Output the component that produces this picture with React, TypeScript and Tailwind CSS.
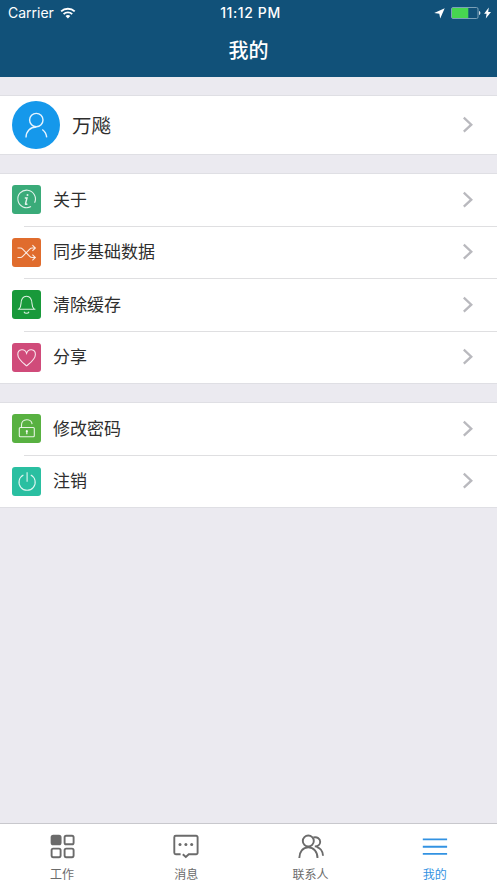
import type { ReactNode } from 'react'

type Item = { label: string; color: string; icon: ReactNode }

const infoItems: Item[] = [
  {
    label: '关于',
    color: 'bg-[#3aab79]',
    icon: (
      <>
        <path d="M19 21.6A8.8 8.8 0 1 1 22.6 17.7" />
        <path d="M12.8 13h2.2l-1.5 5.8c-.2.8.7.8 1.9.1" strokeWidth="1.4" />
        <circle cx="15.5" cy="10" r="1" fill="currentColor" stroke="none" />
      </>
    ),
  },
  {
    label: '同步基础数据',
    color: 'bg-[#e06c2d]',
    icon: (
      <>
        <path d="M5.5 10h2.8c1.2 0 1.8.5 2.6 1.3l6.6 6.8c.8.9 1.5 1.4 2.7 1.4h3" />
        <path d="M5.5 19.5h2.8c1.2 0 1.8-.5 2.6-1.4l6.6-6.8c.8-.8 1.5-1.3 2.7-1.3h3" />
        <path d="m20.4 7.2 2.9 2.8-2.9 2.8M20.4 16.7l2.9 2.8-2.9 2.8" />
      </>
    ),
  },
  {
    label: '清除缓存',
    color: 'bg-[#18993a]',
    icon: (
      <>
        <path d="M5.8 19.2h17.6M7 19c1.7-1.5 1.9-3.2 2-5.5.2-4.2 2.2-7.3 5.5-7.3s5.3 3.1 5.5 7.3c.1 2.3.4 4 2.1 5.5" />
        <path d="M12 21.7c.8 2.1 4.2 2.1 5 0" />
      </>
    ),
  },
  {
    label: '分享',
    color: 'bg-[#d04b7a]',
    icon: <path d="M14.6 22.8C11.5 20.2 5.8 16.4 5.8 11.4c0-5.6 7.1-6.4 8.8-1.1 1.7-5.3 8.8-4.5 8.8 1.1 0 5-5.7 8.8-8.8 11.4Z" />,
  },
]

const accountItems: Item[] = [
  {
    label: '修改密码',
    color: 'bg-[#58b141]',
    icon: (
      <>
        <rect x="7.3" y="13.5" width="15" height="9.2" rx="1" />
        <path d="M9.5 13.4v-2.3c0-6.8 10-7.1 10.6-1" />
        <path d="M14.8 17v3.3" strokeWidth="1.3" />
        <circle cx="14.8" cy="17.2" r="1.1" fill="currentColor" stroke="none" />
      </>
    ),
  },
  {
    label: '注销',
    color: 'bg-[#2abfa1]',
    icon: (
      <>
        <path d="M11.4 8a8.1 8.1 0 1 0 7.4 0" />
        <path d="M15.1 5.3v9.4" />
      </>
    ),
  },
]

const tabs: Item[] = [
  {
    label: '工作',
    color: 'text-[#6b6b6b]',
    icon: (
      <>
        <rect x="4.6" y="3.7" width="9" height="8.6" rx="1.6" fill="currentColor" />
        <rect x="17.6" y="3.7" width="9" height="8.6" rx="1.6" />
        <rect x="4.6" y="16.6" width="9" height="8.6" rx="1.6" />
        <rect x="17.6" y="16.6" width="9" height="8.6" rx="1.6" />
      </>
    ),
  },
  {
    label: '消息',
    color: 'text-[#6b6b6b]',
    icon: (
      <>
        <path d="M9.6 22.2H4.8A1.5 1.5 0 0 1 3.3 20.7V5.2A1.5 1.5 0 0 1 4.8 3.7h20.3a1.5 1.5 0 0 1 1.5 1.5v15.5a1.5 1.5 0 0 1-1.5 1.5h-7.3L14.8 25l-3-2.8" />
        <g fill="currentColor" stroke="none">
          <circle cx="9" cy="12.4" r="1.5" />
          <circle cx="14.9" cy="12.4" r="1.5" />
          <circle cx="20.7" cy="12.4" r="1.5" />
        </g>
      </>
    ),
  },
  {
    label: '联系人',
    color: 'text-[#6b6b6b]',
    icon: (
      <>
        <circle cx="12.3" cy="9" r="5.5" />
        <path d="M3.3 26c0-6.5 3.6-10.6 9-10.6s9.2 4.1 9.2 10.6M17.3 5.5c3.9-.9 6.9 1.1 6.9 4.3 0 3-2.5 4.7-5.4 4.7M20.6 14.9c3.9 1.2 6.2 4.2 6.4 8.8" />
      </>
    ),
  },
  {
    label: '我的',
    color: 'text-[#3292e2]',
    icon: <path d="M2.8 7.4h24.3M2.8 14.7h24.3M2.8 21.9h24.3" />,
  },
]

function Chevron() {
  return (
    <svg width="12" height="18" viewBox="0 0 12 18" className="mr-[23px] ml-auto shrink-0 text-[#b9b9be]" fill="none" stroke="currentColor" strokeWidth="2.3">
      <path d="m1.8 1.7 7.5 7-7.5 7" />
    </svg>
  )
}

function Group({ items }: { items: Item[] }) {
  return (
    <section className="border-y border-[#dfdfe4] bg-white">
      {items.map((item, i) => (
        <div key={item.label}>
          {i > 0 && <div className="ml-6 h-px bg-[#dfdfe1]" />}
          <div className="flex h-[51.5px] items-center pl-3">
            <div className={`h-[29px] w-[29px] shrink-0 rounded-[3px] ${item.color}`}>
              <svg width="29" height="29" viewBox="0 0 29 29" className="text-white/85" fill="none" stroke="currentColor" strokeWidth="1.1">
                {item.icon}
              </svg>
            </div>
            <span className="ml-3 text-[17px] leading-6">{item.label}</span>
            <Chevron />
          </div>
        </div>
      ))}
    </section>
  )
}

function StatusBar() {
  return (
    <div className="grid h-[26px] grid-cols-3 items-center text-[14px] leading-5">
      <div className="flex items-center pl-[8px]">
        <span>Carrier</span>
        <svg width="16" height="12" viewBox="0 0 16 12" className="mb-px ml-[6px]" fill="none" stroke="currentColor" strokeWidth="1.9">
          <path d="M1.1 4.4c3.8-3.6 9.8-3.6 13.6 0M3.6 7.1c2.4-2.3 6.2-2.3 8.6 0" />
          <path d="M5.5 9c1.3-1.3 3.5-1.3 4.8 0L7.9 11.5Z" fill="currentColor" stroke="none" />
        </svg>
      </div>
      <span className="pl-[4px] text-center font-medium tracking-[0.6px]">11:12 PM</span>
      <div className="flex items-center justify-end pr-[6px]">
        <svg width="11" height="11" viewBox="0 0 11 11" fill="currentColor">
          <path d="M10.7.2 6.2 10.6 5.3 5.8.2 4.9Z" />
        </svg>
        <svg width="30" height="12" viewBox="0 0 30 12" className="ml-[6px]">
          <rect x=".5" y=".5" width="26.5" height="11" rx="1.5" fill="none" stroke="#7ba1b8" />
          <path d="M1 1h16.3v10H1Z" fill="#47d650" />
          <path d="M28.2 4c1.5.4 1.5 3.6 0 4Z" fill="#fff" />
        </svg>
        <svg width="7" height="12" viewBox="0 0 7 12" className="ml-[3px]" fill="currentColor">
          <path d="M4.8.5.1 6.7h2.5L1.8 11.5 7 5H4.2Z" />
        </svg>
      </div>
    </div>
  )
}

export default function App() {
  return (
    <div className="flex h-[883px] w-[497px] flex-col overflow-hidden bg-[#ebeaf0] font-[Inter,'Noto_Sans_CJK_SC',sans-serif] text-[#2e2e2e]">
      <header className="h-[77px] shrink-0 bg-[#115179] text-white">
        <StatusBar />
        <h1 className="text-center text-[20px] font-medium leading-[51px]">我的</h1>
      </header>

      <main className="flex flex-1 flex-col gap-[18px] pt-[18px]">
        <section className="flex h-[60px] items-center border-y border-[#dfdfe4] bg-white pl-3">
          <div className="h-12 w-12 shrink-0 rounded-full bg-[#1598eb]">
            <svg width="48" height="48" viewBox="0 0 48 48" fill="none" stroke="#e5f4ff" strokeWidth="1.4">
              <circle cx="24.3" cy="19.1" r="6.7" />
              <path d="M14 36.4c.1-5.9 4.1-10.4 10.3-10.4M30.3 28.5c2.5 1.8 4.1 4.6 4.4 7.9" />
            </svg>
          </div>
          <span className="ml-3 pt-[2px] text-[19.5px] leading-7">万飚</span>
          <Chevron />
        </section>

        <Group items={infoItems} />
        <Group items={accountItems} />
      </main>

      <nav className="grid h-[60px] shrink-0 grid-cols-4 border-t border-[#c8c8cd] bg-white">
        {tabs.map((tab) => (
          <div key={tab.label} className={`flex flex-col items-center pt-[8px] ${tab.color}`}>
            <svg width="30" height="30" viewBox="0 0 30 30" fill="none" stroke="currentColor" strokeWidth="1.9">
              {tab.icon}
            </svg>
            <span className="mt-[5px] text-[12px] leading-4">{tab.label}</span>
          </div>
        ))}
      </nav>
    </div>
  )
}
